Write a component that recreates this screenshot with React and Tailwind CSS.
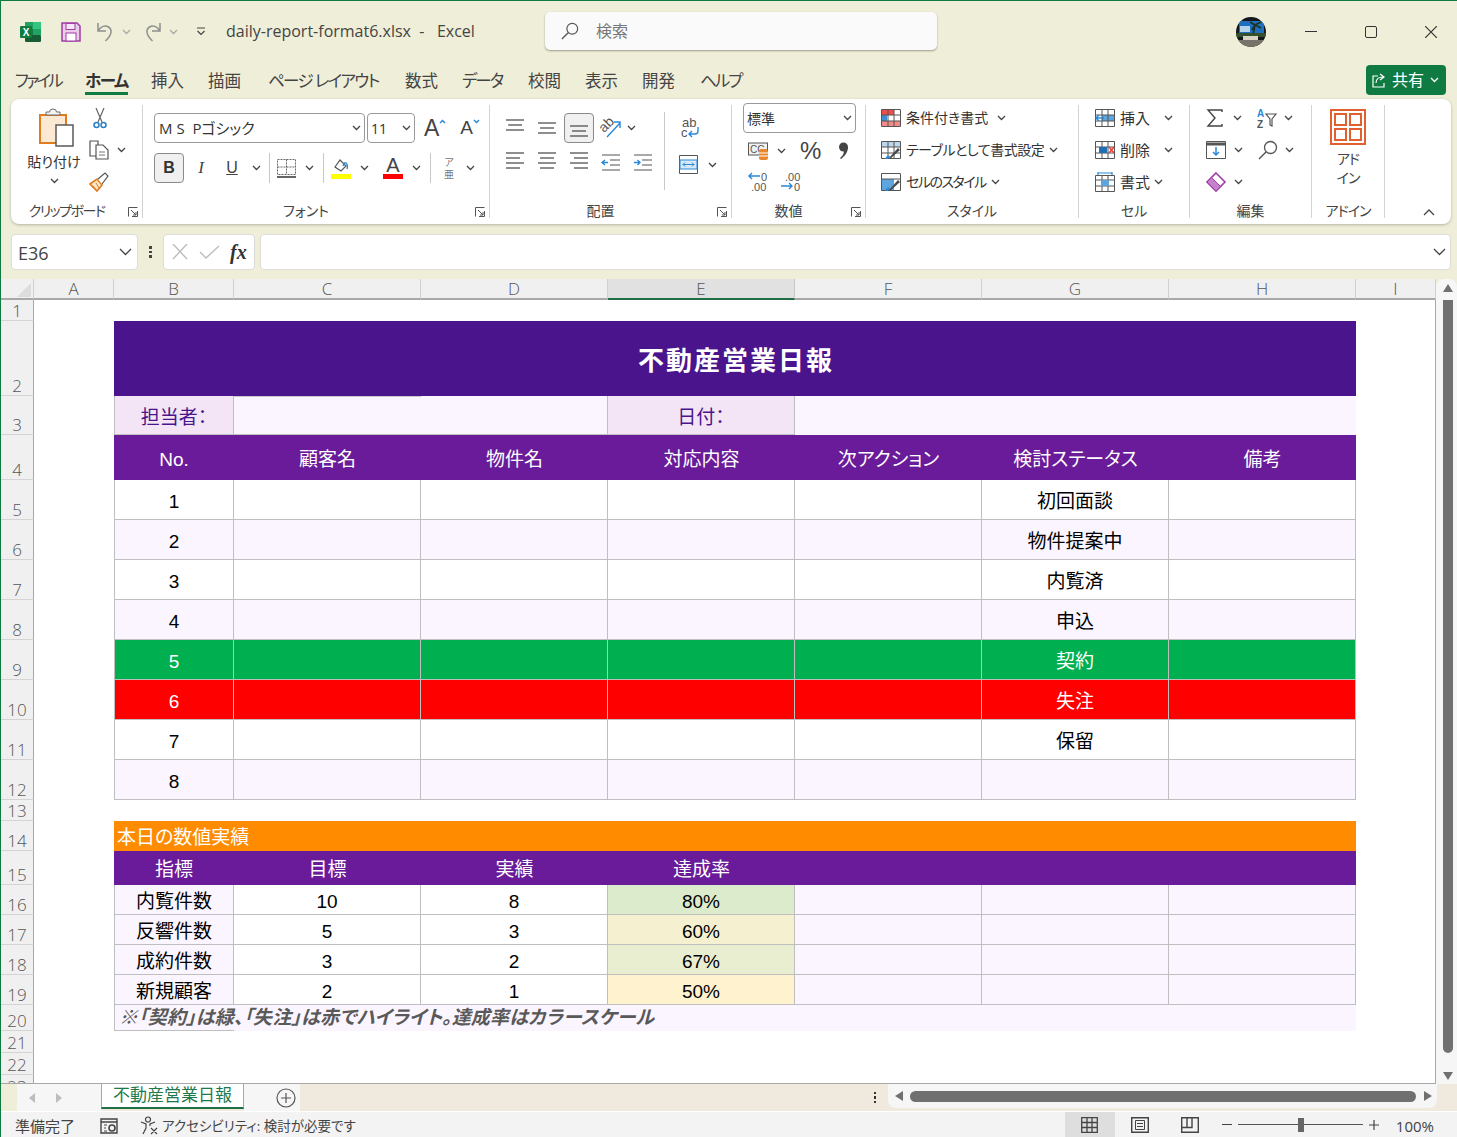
const Chev = ({ className = "", color = "#444" }) => (
  <svg width="9" height="6" viewBox="0 0 9 6" fill="none" className={className}>
    <path d="M1 1l3.5 3.5L8 1" stroke={color} strokeWidth="1.3" />
  </svg>
);

const Ic = ({ w = 20, h = 20, children, className = "" }) => (
  <svg width={w} height={h} viewBox={`0 0 ${w} ${h}`} fill="none" className={`shrink-0 overflow-visible ${className}`}>
    {children}
  </svg>
);

// small icons for the title bar
const ExcelLogo = () => (
  <Ic w={21} h={20}>
    <rect x="5" y="0" width="16" height="7" fill="#21a366" />
    <rect x="5" y="7" width="16" height="6" fill="#107c41" />
    <rect x="5" y="13" width="16" height="7" rx="1" fill="#185c37" />
    <rect x="13" y="0" width="8" height="7" fill="#33c481" />
    <rect x="13" y="7" width="8" height="6" fill="#21a366" />
    <rect x="0" y="4" width="12" height="12" rx="1" fill="#0f7a41" />
    <text x="6" y="13.5" fontSize="10" fontWeight="700" fill="#fff" textAnchor="middle" fontFamily="Liberation Sans">X</text>
  </Ic>
);
const SaveIcon = () => (
  <Ic w={20} h={20}>
    <path d="M1 1h15l3 3v15H1z" fill="#e9cde9" stroke="#a13ca8" strokeWidth="1.5" />
    <rect x="5" y="1.5" width="9" height="6" fill="#f6e8f6" stroke="#a13ca8" />
    <rect x="5" y="11" width="10" height="8" fill="#fff" stroke="#a13ca8" />
  </Ic>
);
const UndoIcon = () => (
  <Ic w={19} h={21}>
    <path d="M2 2v8h8M2.500 9.500C5 5.500 9 4 12.500 6c4 2.500 3.500 8-3 14" stroke="#8f8f8f" strokeWidth="1.5" />
  </Ic>
);
const RedoIcon = () => (
  <Ic w={19} h={21}>
    <path d="M17 2v8H9M16.500 9.500C14 5.500 10 4 6.500 6c-4 2.500-3.500 8 3 14" stroke="#8f8f8f" strokeWidth="1.5" />
  </Ic>
);
const Avatar = () => (
  <svg width="30" height="30" viewBox="0 0 30 30" className="shrink-0">
    <defs>
      <clipPath id="av"><circle cx="15" cy="15" r="15" /></clipPath>
    </defs>
    <g clipPath="url(#av)">
      <rect width="30" height="30" fill="#14181c" />
      <rect x="3" y="4" width="25" height="12" fill="#1f6fc0" />
      <rect x="4" y="9" width="10" height="6" fill="#b5d3ea" />
      <path d="M17 18l2-11M19 8l6-3M19 8l-5-3M19 8l6 3M19 8l-3 5" stroke="#1d3320" strokeWidth="1.800" />
      <rect x="0" y="16" width="30" height="4" fill="#34502d" />
      <rect x="7" y="19" width="15" height="4" fill="#d8d4c4" />
      <rect x="2" y="23" width="26" height="7" fill="#77736a" />
    </g>
  </svg>
);

// clipboard group
const PasteIcon = () => (
  <Ic w={36} h={38}>
    <rect x="1" y="6" width="26" height="28" fill="#fbe9d3" stroke="#e07d20" strokeWidth="2" />
    <path d="M7 6h14V3h-3.500a3.500 3 0 0 0-7 0H7z" fill="#f4f4f4" stroke="#6b6b6b" />
    <rect x="17" y="16" width="17" height="21" fill="#fff" stroke="#595959" strokeWidth="1.5" />
  </Ic>
);
const ScissorsIcon = () => (
  <Ic w={14} h={21}>
    <path d="M3 0l6 14M11 0L5 14" stroke="#666" strokeWidth="1.2" />
    <circle cx="3.500" cy="17" r="2.500" stroke="#2b7fc4" strokeWidth="1.5" />
    <circle cx="10.500" cy="17" r="2.500" stroke="#2b7fc4" strokeWidth="1.5" />
  </Ic>
);
const CopyIcon = () => (
  <Ic w={20} h={20}>
    <path d="M1 1h8v15H1z" stroke="#555" strokeWidth="1.2" />
    <path d="M7 5h7l5 5v9H7z" fill="#fff" stroke="#555" strokeWidth="1.2" />
    <path d="M10 12h6M10 15h6" stroke="#777" />
  </Ic>
);
const PainterIcon = () => (
  <Ic w={20} h={20}>
    <path d="M1 12l7-5 5 6-5 6z" fill="#fde5c5" stroke="#e07d20" strokeWidth="1.6" />
    <path d="M9 7l7-6 3 3-6 8" fill="#fff" stroke="#555" strokeWidth="1.2" />
    <path d="M4 14l3 4M7 11l3 5" stroke="#e07d20" />
  </Ic>
);

// font group
const GrowA = ({ up }) => (
  <span className="flex shrink-0 items-start font-['Liberation_Sans'] text-[#444]">
    <span className={up ? "text-[23px] leading-[24px]" : "text-[19px] leading-[24px]"}>A</span>
    <svg width="7" height="5" viewBox="0 0 7 5" fill="none" className="mt-[3px]">
      <path d={up ? "M1 4l2.500-2.500L6 4" : "M1 1l2.500 2.500L6 1"} stroke="#2b88d8" strokeWidth="1.5" />
    </svg>
  </span>
);
const BorderIcon = () => (
  <Ic w={19} h={19}>
    <path d="M.5.5h18v15H.5zM9.500.5v15M.5 8h18" stroke="#666" strokeDasharray="2 1" />
    <path d="M0 18h19" stroke="#333" strokeWidth="1.5" />
  </Ic>
);
const FillIcon = () => (
  <Ic w={20} h={21}>
    <path d="M4 9l5-7 6 6-5 5z" fill="#fff" stroke="#555" strokeWidth="1.2" />
    <path d="M12 8c1-3 2-4 3-3s2 3 1 6" stroke="#2b88d8" strokeWidth="1.4" />
    <rect x="0" y="16" width="20" height="5" fill="#ffff00" />
  </Ic>
);
const ColorA = () => (
  <span className="flex w-[20px] shrink-0 flex-col items-center">
    <span className="h-[16px] font-['Liberation_Sans'] text-[20px] leading-[17px] text-[#444]">A</span>
    <span className="mt-[1px] h-[5px] w-[20px] bg-[#ff0000]" />
  </span>
);

// alignment lines
const Lines = ({ rows }) => (
  <Ic w={18} h={20}>
    {rows.map(([x1, x2, y], i) => (
      <path key={i} d={`M${x1} ${y}H${x2}`} stroke="#444" strokeWidth="1.2" />
    ))}
  </Ic>
);
const OrientIcon = () => (
  <Ic w={22} h={22}>
    <text x="0" y="13" fontSize="14" fill="#555" fontFamily="Liberation Sans" transform="rotate(-45 6 10)">ab</text>
    <path d="M7 20L20 6M14 5h6v6" stroke="#2b88d8" strokeWidth="1.4" />
  </Ic>
);
const WrapIcon = () => (
  <Ic w={19} h={21}>
    <text x="1" y="10" fontSize="13" fill="#555" fontFamily="Liberation Sans">ab</text>
    <text x="0" y="20" fontSize="13" fill="#555" fontFamily="Liberation Sans">c</text>
    <path d="M17 10v4a3 3 0 0 1-3 3H8M11 14l-3 3 3 3" stroke="#2b88d8" strokeWidth="1.4" />
  </Ic>
);
const IndentIcon = ({ rev }) => (
  <Ic w={18} h={17}>
    <path d="M0 1h18M8 6h10M8 11h10M0 16h18" stroke="#555" strokeWidth="1.2" />
    <path d={rev ? "M0 8.500h6M3 6L0 8.500 3 11" : "M0 8.500h6M3.500 6L6 8.500 3.500 11"} stroke="#2b88d8" strokeWidth="1.4" />
  </Ic>
);
const MergeIcon = () => (
  <Ic w={19} h={19}>
    <path d="M.5.5h18v18H.5z" stroke="#555" />
    <rect x="1" y="5" width="17" height="9" fill="#d6e9f8" stroke="#2b88d8" />
    <path d="M4 9.500h11M6 7.500l-2 2 2 2M13 7.500l2 2-2 2" stroke="#2b88d8" />
  </Ic>
);

// number group
const CurrencyIcon = () => (
  <Ic w={21} h={21}>
    <rect x=".5" y="3" width="19" height="12" fill="#f1f1f1" stroke="#555" />
    <text x="2" y="13" fontSize="10" fill="#555" fontFamily="Liberation Sans">CC</text>
    <rect x="11" y="9" width="9" height="11" rx="2" fill="#e8872b" />
    <path d="M11 13h9M11 16h9" stroke="#fff" />
  </Ic>
);
const DecIcon = ({ more }) => (
  <Ic w={21} h={21}>
    <text x={more ? 5 : 13} y="10" fontSize="11" fill="#555" fontFamily="Liberation Sans">{more ? ".00" : "0"}</text>
    <text x={more ? 14 : 3} y="20" fontSize="11" fill="#555" fontFamily="Liberation Sans">{more ? "0" : ".00"}</text>
    {more ? (
      <path d="M1 15h11M9 12l3 3-3 3" stroke="#2b88d8" strokeWidth="1.4" />
    ) : (
      <path d="M1 5h11M4 2L1 5l3 3" stroke="#2b88d8" strokeWidth="1.4" />
    )}
  </Ic>
);
const CommaIcon = () => (
  <Ic w={11} h={18}>
    <circle cx="5.500" cy="5" r="4.500" fill="#444" />
    <path d="M10 5c0 5-3 9-7 12l-1-1c3-2 4-5 4-8z" fill="#444" />
  </Ic>
);

// style group
const Grid = () => (
  <path d="M.5.5h19v17H.5zM.5 6h19M.5 12h19M7 .5v17M13 .5v17" stroke="#555" />
);
const CondIcon = () => (
  <Ic h={18}>
    <rect x="1" y="1" width="12" height="5" fill="#ef4c4c" />
    <rect x="1" y="6" width="5" height="6" fill="#3e8ed0" />
    <rect x="1" y="12" width="18" height="5" fill="#f28a8a" />
    <Grid />
  </Ic>
);
const TableIcon = () => (
  <Ic h={19}>
    <rect x="1" y="1" width="18" height="5" fill="#bcd8ef" />
    <Grid />
    <path d="M7 18l10-11 2 2-10 9z" fill="#4a4a4a" />
    <path d="M4 18c2-4 3-4 5-3l-2 3z" fill="#2b88d8" />
  </Ic>
);
const CellStyleIcon = () => (
  <Ic h={19}>
    <rect x="1" y="6" width="12" height="11" fill="#5da5dc" />
    <path d="M.5.5h19v17H.5zM.5 6h19" stroke="#555" />
    <path d="M7 18l10-11 2 2-10 9z" fill="#4a4a4a" />
    <path d="M4 18c2-4 3-4 5-3l-2 3z" fill="#2b88d8" />
  </Ic>
);

// cell group
const InsertCellIcon = () => (
  <Ic h={18}>
    <rect x="7" y="6" width="12" height="6" fill="#5da5dc" />
    <Grid />
    <path d="M9 9H1M4 6L1 9l3 3" stroke="#2b88d8" strokeWidth="1.5" />
  </Ic>
);
const DeleteCellIcon = () => (
  <Ic h={18}>
    <Grid />
    <rect x="4" y="6" width="8" height="6" fill="#1f6fb5" />
    <path d="M14 6l5 6M19 6l-5 6" stroke="#ee3b3b" strokeWidth="1.5" />
  </Ic>
);
const FormatCellIcon = () => (
  <Ic h={20}>
    <path d="M.5 3.500h19v16H.5zM.5 8h19M.5 14h19M7 3.500v16M13 3.500v16" stroke="#555" />
    <rect x="6" y="8" width="8" height="6" fill="#5da5dc" />
    <path d="M3 1h14M3 0v3M17 0v3" stroke="#2b88d8" strokeWidth="1.2" />
  </Ic>
);

// edit group
const Sigma = () => (
  <Ic w={16} h={18}>
    <path d="M15 3V1H1l7 8-7 8h14v-2" stroke="#444" strokeWidth="1.4" />
  </Ic>
);
const SortIcon = () => (
  <Ic h={20}>
    <text x="0" y="9" fontSize="10" fontWeight="700" fill="#2b88d8" fontFamily="Liberation Sans">A</text>
    <text x="0" y="19.500" fontSize="10" fontWeight="700" fill="#555" fontFamily="Liberation Sans">Z</text>
    <path d="M9 6h10l-4 5v7l-2-1v-6z" stroke="#555" strokeWidth="1.2" />
  </Ic>
);
const FillDownIcon = () => (
  <Ic h={18}>
    <path d="M.5.5h19v17H.5z" fill="#fff" stroke="#555" />
    <path d="M0 3h20" stroke="#555" strokeWidth="3" />
    <path d="M10 6v8M7 11l3 3 3-3" stroke="#2b88d8" strokeWidth="1.5" />
  </Ic>
);
const FindIcon = ({ size = 20, color = "#555" }) => (
  <svg width={size} height={size} viewBox="0 0 20 20" fill="none" className="shrink-0">
    <circle cx="12.500" cy="7.500" r="6" stroke={color} strokeWidth="1.3" />
    <path d="M8 12l-7 7" stroke={color} strokeWidth="1.5" />
  </svg>
);
const EraserIcon = () => (
  <Ic h={20}>
    <path d="M10 1l9 9-9 9-9-9z" fill="#fff" stroke="#a13ca8" strokeWidth="1.6" />
    <path d="M5.500 5.500l9 9L10 19l-9-9z" fill="#c681cc" stroke="#a13ca8" />
  </Ic>
);
const AddinIcon = () => (
  <Ic w={36} h={36}>
    <rect x="1" y="1" width="34" height="34" stroke="#e0602f" strokeWidth="2" />
    <rect x="5" y="5" width="11" height="11" stroke="#e0602f" strokeWidth="2" />
    <rect x="20" y="5" width="11" height="11" stroke="#e0602f" strokeWidth="2" />
    <rect x="5" y="20" width="11" height="11" stroke="#e0602f" strokeWidth="2" />
    <rect x="20" y="20" width="11" height="11" stroke="#e0602f" strokeWidth="2" />
  </Ic>
);

const Launcher = () => (
  <svg width="10" height="10" viewBox="0 0 10 10" fill="none" className="absolute right-[4px] top-[3px]">
    <path d="M.5 9.500V.5h9M9.500 4v5.500H4M3 3l5 5M8 5v3H5" stroke="#555" />
  </svg>
);

const Group = ({ width, label, launcher, border = true, labelClass = "", children }) => (
  <div className={`flex my-[6px] flex-col ${width} ${border ? "border-r border-[#d3d3d3]" : ""}`}>
    <div className="flex-1">{children}</div>
    <div className={`relative h-[14px] text-center text-[14px] leading-[14px] text-[#444] ${launcher ? "pr-[20px]" : ""} ${labelClass}`}>
      {label}
      {launcher && <Launcher />}
    </div>
  </div>
);

const Sep = ({ className = "h-[30px]" }) => <div className={`w-px shrink-0 bg-[#c8c8c8] ${className}`} />;

const Ribbon = () => (
  <div className="ml-[10px] flex h-[125px] w-[1440px] shrink-0 rounded-lg bg-white shadow-[0_1px_3px_rgba(0,0,0,0.25)]">
    <Group width="w-[132px]" label="クリップボード" launcher labelClass="tracking-[-1.5px]">
      <div className="flex">
        <div className="ml-[13px] flex w-[60px] flex-col items-center">
          <div className="mt-[4px] ml-[5px]"><PasteIcon /></div>
          <div className="mt-[5px] whitespace-nowrap text-[14px] leading-[20px] text-[#333]">貼り付け</div>
          <Chev className="mt-[6px]" />
        </div>
        <div className="ml-[5px] flex flex-col">
          <div className="ml-[4px] mt-[3px]"><ScissorsIcon /></div>
          <div className="mt-[11px] flex items-center"><CopyIcon /><Chev className="ml-[8px]" /></div>
          <div className="mt-[12px]"><PainterIcon /></div>
        </div>
      </div>
    </Group>

    <Group width="w-[347px]" label="フォント" launcher>
      <div className="ml-[11px] mt-[8px] flex items-center">
        <div className="flex h-[30px] w-[211px] items-center justify-between rounded-[4px] border border-[#999] px-[4px] pr-[3px]">
          <span className="whitespace-pre text-[15px] text-[#333]">M S  Pゴシック</span>
          <Chev />
        </div>
        <div className="ml-[2px] flex h-[30px] w-[48px] items-center justify-between rounded-[4px] border border-[#999] pl-[3px] pr-[3px]">
          <span className="font-['Open_Sans'] text-[14px] text-[#333]">11</span>
          <Chev />
        </div>
        <div className="ml-[9px]"><GrowA up /></div>
        <div className="ml-[14px]"><GrowA /></div>
      </div>
      <div className="ml-[11px] mt-[10px] flex h-[30px] items-center">
        <div className="flex h-[30px] w-[30px] items-center justify-center rounded-[4px] border border-[#8a8a8a] bg-[#f0f0f0] font-['Liberation_Sans'] text-[16px] font-bold text-[#333]">B</div>
        <div className="w-[34px] text-center font-['Liberation_Serif'] text-[17px] italic text-[#444]">I</div>
        <div className="w-[28px] text-center font-['Liberation_Sans'] text-[16px] text-[#444] underline">U</div>
        <Chev className="ml-[6px]" />
        <Sep className="ml-[8px] h-[30px]" />
        <div className="ml-[7px]"><BorderIcon /></div>
        <Chev className="ml-[9px]" />
        <Sep className="ml-[9px] h-[30px]" />
        <div className="ml-[7px]"><FillIcon /></div>
        <Chev className="ml-[9px]" />
        <div className="ml-[14px]"><ColorA /></div>
        <Chev className="ml-[9px]" />
        <Sep className="ml-[9px] h-[30px]" />
        <div className="ml-[12px] flex w-[12px] flex-col items-center text-[10px] leading-[12px] text-[#777]"><span>ア</span><span>亜</span></div>
        <Chev className="ml-[11px]" />
      </div>
    </Group>

    <Group width="w-[242px]" label="配置" launcher>
      <div className="flex">
        <div className="ml-[9px] mt-[8px] flex w-[165px] shrink-0 flex-col">
          <div className="flex h-[30px] items-center">
            <div className="flex w-[32px] justify-center"><Lines rows={[[0, 18, 2], [2, 16, 7], [0, 18, 12]]} /></div>
            <div className="flex w-[32px] justify-center"><Lines rows={[[0, 18, 5], [2, 16, 10], [0, 18, 15]]} /></div>
            <div className="ml-[1px] flex h-[30px] w-[30px] items-center justify-center rounded-[4px] border border-[#8a8a8a] bg-[#f0f0f0]"><Lines rows={[[0, 18, 8], [2, 16, 13], [0, 18, 18]]} /></div>
            <div className="ml-[6px]"><OrientIcon /></div>
            <Chev className="ml-[5px]" />
          </div>
          <div className="mt-[9px] flex h-[20px] items-center">
            <div className="flex w-[32px] justify-center"><Lines rows={[[0, 18, 1], [0, 14, 6], [0, 18, 11], [0, 14, 16]]} /></div>
            <div className="flex w-[32px] justify-center"><Lines rows={[[0, 18, 1], [2, 16, 6], [0, 18, 11], [2, 16, 16]]} /></div>
            <div className="flex w-[32px] justify-center"><Lines rows={[[0, 18, 1], [4, 18, 6], [0, 18, 11], [4, 18, 16]]} /></div>
            <div className="flex w-[32px] justify-center"><IndentIcon rev /></div>
            <div className="flex w-[32px] justify-center"><IndentIcon /></div>
          </div>
        </div>
        <Sep className="mt-[7px] h-[78px]" />
        <div className="ml-[14px] flex flex-col">
          <div className="ml-[2px] mt-[12px]"><WrapIcon /></div>
          <div className="mt-[17px] flex items-center"><MergeIcon /><Chev className="ml-[10px]" /></div>
        </div>
      </div>
    </Group>

    <Group width="w-[134px]" label="数値" launcher>
      <div className="ml-[11px] -mt-[2px] flex h-[30px] w-[113px] items-center justify-between rounded-[4px] border border-[#999] pl-[3px] pr-[3px]">
        <span className="text-[14px] text-[#333]">標準</span>
        <Chev />
      </div>
      <div className="ml-[16px] mt-[7px] flex h-[21px] items-center">
        <CurrencyIcon />
        <Chev className="ml-[8px]" />
        <span className="ml-[14px] font-['Liberation_Sans'] text-[24px] leading-[24px] text-[#444]">%</span>
        <div className="ml-[17px]"><CommaIcon /></div>
      </div>
      <div className="ml-[16px] mt-[10px] flex items-center gap-[11px]"><DecIcon /><DecIcon more /></div>
    </Group>

    <Group width="w-[213px]" label="スタイル">
      <div className="ml-[15px] mt-[3px] flex flex-col gap-[12px] text-[14px] leading-[20px] text-[#333]">
        <div className="flex h-[20px] items-center"><CondIcon /><span className="ml-[5px] w-[86px] whitespace-nowrap">条件付き書式</span><Chev className="ml-[5px]" /></div>
        <div className="flex h-[20px] items-center"><TableIcon /><span className="ml-[5px] w-[138px] whitespace-nowrap tracking-[-0.5px]">テーブルとして書式設定</span><Chev className="ml-[5px]" /></div>
        <div className="flex h-[20px] items-center"><CellStyleIcon /><span className="ml-[5px] w-[80px] whitespace-nowrap tracking-[-1.5px]">セルのスタイル</span><Chev className="ml-[5px]" /></div>
      </div>
    </Group>

    <Group width="w-[111px]" label="セル">
      <div className="ml-[16px] mt-[3px] flex flex-col gap-[12px] text-[15px] leading-[20px] text-[#333]">
        <div className="flex h-[20px] items-center"><InsertCellIcon /><span className="ml-[5px] w-[44px]">挿入</span><Chev /></div>
        <div className="flex h-[20px] items-center"><DeleteCellIcon /><span className="ml-[5px] w-[44px]">削除</span><Chev /></div>
        <div className="flex h-[20px] items-center"><FormatCellIcon /><span className="ml-[5px] w-[34px]">書式</span><Chev /></div>
      </div>
    </Group>

    <Group width="w-[122px]" label="編集">
      <div className="ml-[15px] mt-[3px] flex flex-col gap-[12px]">
        <div className="flex h-[20px] items-center">
          <div className="ml-[2px] w-[26px]"><Sigma /></div><Chev />
          <div className="ml-[15px]"><SortIcon /></div><Chev className="ml-[7px]" />
        </div>
        <div className="flex h-[20px] items-center">
          <div className="ml-[1px] w-[26px]"><FillDownIcon /></div><Chev className="ml-[2px]" />
          <div className="ml-[15px]"><FindIcon /></div><Chev className="ml-[7px]" />
        </div>
        <div className="flex h-[20px] items-center">
          <div className="ml-[1px] w-[26px]"><EraserIcon /></div><Chev className="ml-[2px]" />
        </div>
      </div>
    </Group>

    <Group width="w-[73px]" label="アドイン" labelClass="tracking-[-1px]">
      <div className="mt-[4px] flex flex-col items-center">
        <AddinIcon />
        <div className="mt-[4px] text-center text-[14px] leading-[19px] tracking-[-1px] text-[#444]">アド<br />イン</div>
      </div>
    </Group>

    <div className="my-[6px] flex flex-1 items-end justify-end pb-[2px] pr-[16px]">
      <svg width="12" height="8" viewBox="0 0 12 8" fill="none"><path d="M1 7l5-5 5 5" stroke="#444" strokeWidth="1.3" /></svg>
    </div>
  </div>
);

const FormulaBar = () => (
  <div className="ml-[10px] mt-[10px] flex h-[36px] w-[1440px] shrink-0 items-stretch">
    <div className="flex w-[127px] items-center justify-between rounded-[4px] border border-[#dcdcdc] bg-white pl-[6px] pr-[5px]">
      <span className="pt-[3px] font-['Open_Sans'] text-[18px] text-[#444]">E36</span>
      <svg width="13" height="8" viewBox="0 0 13 8" fill="none"><path d="M1 1l5.500 5.500L12 1" stroke="#444" strokeWidth="1.3" /></svg>
    </div>
    <div className="flex w-[25px] flex-col items-center justify-center gap-[2px]">
      <i className="h-[2.500px] w-[2.500px] bg-[#444]" /><i className="h-[2.500px] w-[2.500px] bg-[#444]" /><i className="h-[2.500px] w-[2.500px] bg-[#444]" />
    </div>
    <div className="flex w-[92px] items-center rounded-[4px] border border-[#dcdcdc] bg-white pl-[7px]">
      <svg width="18" height="16" viewBox="0 0 18 16" fill="none"><path d="M2 0l14 15M16 0L2 15" stroke="#bdbdbd" strokeWidth="1.4" /></svg>
      <svg width="21" height="14" viewBox="0 0 21 14" fill="none" className="ml-[10px]"><path d="M1 7l6 6L20 1" stroke="#bdbdbd" strokeWidth="1.4" /></svg>
      <span className="ml-[10px] font-['Liberation_Serif'] text-[20px] font-bold italic text-[#333]">fx</span>
    </div>
    <div className="ml-[5px] flex flex-1 items-center justify-end rounded-[4px] border border-[#dcdcdc] bg-white pr-[4px]">
      <svg width="13" height="8" viewBox="0 0 13 8" fill="none"><path d="M1 1l5.500 5.500L12 1" stroke="#444" strokeWidth="1.3" /></svg>
    </div>
  </div>
);

const headFont = "font-['Open_Sans','Noto_Sans_CJK_JP',sans-serif] font-light text-[17px] text-[#555]";
const line = "border-[#bfbfbf]";
const colC = "w-[187px]";

const ColHead = ({ label, width, active }) => (
  <div className={`flex h-full items-center justify-center border-b-2 border-r ${width} ${headFont} ${active ? "border-b-[#1e6f46] border-r-[#c8c8c8] bg-[#e1e1e1] text-[#1e6f46]" : "border-b-[#a8a8a8] border-r-[#d0d0d0]"}`}>
    {label}
  </div>
);

const ColHeaders = () => (
  <div className="flex h-[21px] shrink-0 bg-[#f0f0f0]">
    <div className="flex h-full w-[33px] items-end justify-end border-b-2 border-r border-b-[#a8a8a8] border-r-[#d0d0d0] pb-[1px] pr-[2px]">
      <svg width="14" height="14" viewBox="0 0 14 14"><path d="M14 0v14H0z" fill="#dcdcdc" /></svg>
    </div>
    <ColHead label="A" width="w-[80px]" />
    <ColHead label="B" width="w-[120px]" />
    <ColHead label="C" width={colC} />
    <ColHead label="D" width={colC} />
    <ColHead label="E" width={colC} active />
    <ColHead label="F" width={colC} />
    <ColHead label="G" width={colC} />
    <ColHead label="H" width={colC} />
    <ColHead label="I" width="w-[80px]" />
  </div>
);

const Row = ({ n, h, children }) => (
  <div className={`flex shrink-0 ${h}`}>
    <div className={`flex w-[33px] shrink-0 items-end justify-center border-b border-r border-b-[#d4d4d4] border-r-[#a8a8a8] bg-[#f0f0f0] leading-[19px] ${headFont}`}>{n}</div>
    <div className="w-[80px] shrink-0" />
    {children}
  </div>
);

const Cell = ({ w = colC, bg = "", first, children, className = "text-black" }) => (
  <div className={`flex shrink-0 items-center justify-center border-b border-r pt-[5px] ${line} ${first ? "border-l" : ""} ${w} ${bg} ${className}`}>
    {children}
  </div>
);
const Cols = ({ bg, no, status, fg }) => (
  <>
    <Cell first w="w-[120px]" bg={bg} className={fg}>{no}</Cell>
    <Cell bg={bg} /><Cell bg={bg} /><Cell bg={bg} /><Cell bg={bg} />
    <Cell bg={bg} className={fg}>{status}</Cell>
    <Cell bg={bg} />
  </>
);
const Head = ({ w = colC, children }) => (
  <div className={`flex shrink-0 items-center justify-center pt-[5px] text-white ${w}`}>{children}</div>
);

const Label = ({ w, children }) => (
  <div className={`flex shrink-0 items-center justify-center border-b border-r pt-[6px] ${line} bg-[#f3e5f5] text-[#4a148c] ${w}`}>{children}</div>
);

const kpis = [
  ["内覧件数", "10", "8", "80%", "bg-[#dcebcc]"],
  ["反響件数", "5", "3", "60%", "bg-[#f5f0cf]"],
  ["成約件数", "3", "2", "67%", "bg-[#eaeed0]"],
  ["新規顧客", "2", "1", "50%", "bg-[#fff2cf]"],
];

const Sheet = () => (
  <div className="flex w-[1435px] min-w-0 flex-1 flex-col overflow-hidden border-b border-r border-[#a8a8a8] bg-white font-['Liberation_Sans','Noto_Sans_CJK_JP',sans-serif] text-[19px]">
    <Row n="1" h="h-[21px]" />
    <Row n="2" h="h-[75px]">
      <div className="flex w-[1242px] items-center justify-center bg-[#4a148c] pl-[2px] pt-[6px] text-[26px] font-bold tracking-[2px] text-white">不動産営業日報</div>
    </Row>
    <Row n="3" h="h-[39px]">
      <Label w="w-[120px] border-l">担当者：</Label>
      <div className={`w-[374px] shrink-0 border-b border-r ${line} bg-[#faf5ff]`}><div className="h-px w-[187px] bg-[#c8c8c8]" /></div>
      <Label w={colC}>日付：</Label>
      <div className="w-[561px] shrink-0 bg-[#faf5ff]" />
    </Row>
    <Row n="4" h="h-[45px]">
      <div className="flex bg-[#6a1b9a]">
        <Head w="w-[120px]">No.</Head>
        <Head>顧客名</Head><Head>物件名</Head><Head>対応内容</Head><Head>次アクション</Head><Head>検討ステータス</Head><Head>備考</Head>
      </div>
    </Row>
    <Row n="5" h="h-[40px]"><Cols no="1" status="初回面談" /></Row>
    <Row n="6" h="h-[40px]"><Cols no="2" status="物件提案中" bg="bg-[#faf5ff]" /></Row>
    <Row n="7" h="h-[40px]"><Cols no="3" status="内覧済" /></Row>
    <Row n="8" h="h-[40px]"><Cols no="4" status="申込" bg="bg-[#faf5ff]" /></Row>
    <Row n="9" h="h-[40px]"><Cols no="5" status="契約" bg="bg-[#00b050]" fg="text-white" /></Row>
    <Row n="10" h="h-[40px]"><Cols no="6" status="失注" bg="bg-[#ff0000]" fg="text-white" /></Row>
    <Row n="11" h="h-[40px]"><Cols no="7" status="保留" /></Row>
    <Row n="12" h="h-[40px]"><Cols no="8" bg="bg-[#faf5ff]" /></Row>
    <Row n="13" h="h-[21px]" />
    <Row n="14" h="h-[30px]">
      <div className="flex w-[1242px] items-center bg-[#ff8c00] pl-[3px] pt-[4px] text-white">本日の数値実績</div>
    </Row>
    <Row n="15" h="h-[34px]">
      <div className="flex w-[1242px] bg-[#6a1b9a]">
        <Head w="w-[120px]">指標</Head><Head>目標</Head><Head>実績</Head><Head>達成率</Head>
      </div>
    </Row>
    {kpis.map(([name, goal, actual, rate, color], i) => (
      <Row key={name} n={16 + i} h="h-[30px]">
        <Cell first w="w-[120px]" bg="bg-[#faf5ff]">{name}</Cell>
        <Cell>{goal}</Cell>
        <Cell>{actual}</Cell>
        <Cell bg={color}>{rate}</Cell>
        <Cell bg="bg-[#faf5ff]" /><Cell bg="bg-[#faf5ff]" /><Cell bg="bg-[#faf5ff]" />
      </Row>
    ))}
    <Row n="20" h="h-[26px]">
      <div className={`relative z-10 flex w-[120px] shrink-0 items-center whitespace-nowrap border-b border-l ${line} bg-[#faf5ff] pl-[4px] pt-[2px] text-[19px] font-bold italic tracking-[0.15px] text-[#595959]`}>※「契約」は緑、「失注」は赤でハイライト。達成率はカラースケール</div>
      <div className="w-[1122px] shrink-0 bg-[#faf5ff]" />
    </Row>
    <Row n="21" h="h-[22px]" />
    <Row n="22" h="h-[22px]" />
    <Row n="23" h="h-[22px]" />
  </div>
);

const VScroll = () => (
  <div className="flex w-[21px] shrink-0 flex-col items-center rounded-t-lg bg-[#f6f6f6] pl-[2px] pt-[4px]">
    <svg width="12" height="10" viewBox="0 0 12 10"><path d="M6 1l5 8H1z" fill="#707070" /></svg>
    <div className="mt-[7px] h-[753px] w-[10px] rounded-b-[5px] bg-[#707070]" />
    <svg width="12" height="10" viewBox="0 0 12 10" className="mt-[18px]"><path d="M6 9L1 1h10z" fill="#707070" /></svg>
  </div>
);

const TabBar = () => (
  <div className="flex h-[27px] shrink-0 items-stretch bg-[#efeadd]">
    <div className="w-[16px] bg-[#efeed8]" />
    <div className="flex w-[84px] items-center gap-[19px] bg-[#f6f6f6] pl-[12px]">
      <svg width="7" height="10" viewBox="0 0 7 10"><path d="M6 0v10L0 5z" fill="#bdbdbd" /></svg>
      <svg width="7" height="10" viewBox="0 0 7 10"><path d="M1 0v10l6-5z" fill="#bdbdbd" /></svg>
    </div>
    <div className="flex h-[25px] w-[143px] items-center justify-center border-b-2 border-l border-r border-b-[#1e6f46] border-l-[#a8a8a8] border-r-[#a8a8a8] bg-white pb-[2px] text-[17px] text-[#1e7a4a]">不動産営業日報</div>
    <div className="flex w-[56px] items-center justify-end bg-[#f6f6f6] pr-[4px]">
      <svg width="20" height="20" viewBox="0 0 20 20" fill="none"><circle cx="10" cy="10" r="9" stroke="#555" strokeWidth="1.2" /><path d="M5 10h10M10 5v10" stroke="#555" strokeWidth="1.2" /></svg>
    </div>
    <div className="flex w-[579px] flex-col items-end justify-center gap-[2px] pr-[3px]">
      <i className="h-[2.500px] w-[2.500px] bg-[#333]" /><i className="h-[2.500px] w-[2.500px] bg-[#333]" /><i className="h-[2.500px] w-[2.500px] bg-[#333]" />
    </div>
    <div className="ml-[9px] flex h-[24px] w-[549px] items-center rounded-b-lg bg-[#f6f6f6] pl-[6px]">
      <svg width="10" height="12" viewBox="0 0 10 12"><path d="M9 1v10L1 6z" fill="#707070" /></svg>
      <div className="ml-[6px] h-[11px] w-[506px] rounded-[6px] bg-[#707070]" />
      <svg width="10" height="12" viewBox="0 0 10 12" className="ml-[7px]"><path d="M1 1v10l8-5z" fill="#707070" /></svg>
    </div>
  </div>
);

const StatusBar = () => (
  <div className="flex h-[26px] shrink-0 items-stretch border-t border-white bg-[#f3f3f3] text-[#444]">
    <span className="ml-[14px] mt-[2px] self-center text-[15px] leading-[22px]">準備完了</span>
    <svg width="18" height="16" viewBox="0 0 18 16" fill="none" className="ml-[25px] mt-[2px] self-center">
      <path d="M1 1h16v14H1zM1 4h16" stroke="#444" strokeWidth="1.4" />
      <circle cx="12" cy="10" r="3" stroke="#444" strokeWidth="1.6" />
      <path d="M4 7h3M4 10h2M4 13h3" stroke="#444" />
    </svg>
    <svg width="18" height="20" viewBox="0 0 18 20" fill="none" className="ml-[22px] mt-[2px] self-center">
      <circle cx="8" cy="3.500" r="2.500" stroke="#444" strokeWidth="1.2" />
      <path d="M1 6l5 2v4l-3 6M15 6l-5 2v2M11 12l6 6M17 12l-6 6" stroke="#444" strokeWidth="1.2" />
    </svg>
    <span className="ml-[4px] mt-[2px] self-center text-[13.500px] leading-[20px]">アクセシビリティ: 検討が必要です</span>
    <div className="ml-auto flex w-[50px] items-center justify-center bg-[#dedede]">
      <svg width="17" height="16" viewBox="0 0 17 16" fill="none"><path d="M.7.7h15.600v14.600H.7zM6 .7v14.600M11 .7v14.600M.7 5.500h15.600M.7 10.500h15.600" stroke="#444" strokeWidth="1.300" /></svg>
    </div>
    <svg width="18" height="16" viewBox="0 0 18 16" fill="none" className="ml-[16px] self-center">
      <path d="M.7.7h16.600v14.600H.7z" stroke="#444" strokeWidth="1.400" /><path d="M4.500 3.500h9v9h-9zM6 6.500h6M6 9.500h6" stroke="#444" />
    </svg>
    <svg width="18" height="16" viewBox="0 0 18 16" fill="none" className="ml-[32px] self-center">
      <path d="M.7.7h16.600v14.600H.7zM.7 10.500H11V.7M6 .7v9.800" stroke="#444" strokeWidth="1.400" />
    </svg>
    <div className="ml-[23px] h-[1.500px] w-[10px] self-center bg-[#444]" />
    <div className="ml-[6px] flex w-[125px] items-center self-center">
      <div className="h-px w-[60px] bg-[#555]" />
      <div className="h-[14px] w-[6px] bg-[#666]" />
      <div className="h-px flex-1 bg-[#555]" />
    </div>
    <svg width="10" height="10" viewBox="0 0 10 10" className="ml-[6px] self-center"><path d="M0 5h10M5 0v10" stroke="#444" strokeWidth="1.200" /></svg>
    <span className="ml-[17px] mr-[23px] mt-[2px] self-center font-['Open_Sans'] text-[15px] leading-[20px]">100%</span>
  </div>
);

export default function App() {
  return (
    <div className="flex h-[1137px] w-[1457px] flex-col overflow-hidden border-l border-t border-[#107c41] bg-[#efeed8] font-['Open_Sans','Noto_Sans_CJK_JP',sans-serif] [font-feature-settings:'palt']">
      {/* title bar */}
      <div className="flex h-[61px] shrink-0 items-center">
        <div className="ml-[19px]"><ExcelLogo /></div>
        <div className="ml-[20px]"><SaveIcon /></div>
        <div className="ml-[15px]"><UndoIcon /></div>
        <Chev className="ml-[7px]" color="#aaa" />
        <div className="ml-[12px]"><RedoIcon /></div>
        <Chev className="ml-[7px]" color="#aaa" />
        <svg width="10" height="10" viewBox="0 0 10 10" fill="none" className="ml-[18px]"><path d="M1 1h8M1.500 4l3.500 3.500L8.500 4" stroke="#444" strokeWidth="1.200" /></svg>
        <span className="mb-[2px] ml-[20px] w-[248px] whitespace-pre text-[16px] text-[#444]">daily-report-format6.xlsx  -   Excel</span>
        <div className="mb-[2px] ml-[71px] flex h-[38px] w-[392px] items-center rounded-[5px] bg-[#fafafa] pl-[16px] shadow-[0_1px_2px_rgba(0,0,0,0.35)]">
          <FindIcon size={18} color="#555" />
          <span className="ml-[17px] text-[16px] text-[#777]">検索</span>
        </div>
        <div className="ml-auto"><Avatar /></div>
        <div className="ml-[39px] h-[1.500px] w-[12px] bg-[#333]" />
        <div className="ml-[48px] h-[12px] w-[12px] rounded-[2px] border-[1.500px] border-[#333]" />
        <svg width="12" height="12" viewBox="0 0 12 12" fill="none" className="ml-[48px] mr-[20px]"><path d="M0 0l12 12M12 0L0 12" stroke="#333" strokeWidth="1.200" /></svg>
      </div>

      {/* ribbon tabs */}
      <div className="flex h-[37px] shrink-0 items-start">
        <div className="ml-[14px] flex gap-[23px] pt-[8px] text-[16.500px] leading-[22px] text-[#444]">
          <span className="w-[47px] whitespace-nowrap tracking-[-2.800px]">ファイル</span>
          <span className="w-[43px] whitespace-nowrap border-b-[3px] border-[#107c41] font-bold tracking-[-1.500px] text-[#333]">ホーム</span>
          <span>挿入</span>
          <span className="ml-[1px]">描画</span>
          <span className="ml-[4px] w-[111px] whitespace-pre tracking-[-1.600px]">ページ レイアウト</span>
          <span className="ml-[3px]">数式</span>
          <span className="ml-[1px] w-[41px] whitespace-nowrap tracking-[-2px]">データ</span>
          <span className="ml-[2px]">校閲</span>
          <span className="ml-[1px]">表示</span>
          <span className="ml-[1px]">開発</span>
          <span className="ml-[2px] w-[41px] whitespace-nowrap tracking-[-2px]">ヘルプ</span>
        </div>
        <div className="ml-auto mr-[11px] mt-[3px] flex h-[30px] w-[80px] items-center rounded-[4px] bg-[#0f7b43] pl-[6px] text-white">
          <svg width="15" height="15" viewBox="0 0 15 15" fill="none"><path d="M6 3H1v11h11v-4M4 10c0-4 3-6 7-6M8 1l4 3-4 3" stroke="#fff" strokeWidth="1.200" /></svg>
          <span className="ml-[5px] text-[16px]">共有</span>
          <Chev className="ml-[6px]" color="#fff" />
        </div>
      </div>

      <Ribbon />
      <FormulaBar />

      <div className="mt-[9px] flex min-h-0 flex-1 flex-col">
        <div className="flex min-h-0 flex-1">
          <div className="flex w-[1435px] min-w-0 flex-col">
            <ColHeaders />
            <Sheet />
          </div>
          <VScroll />
        </div>
        <TabBar />
        <StatusBar />
      </div>
    </div>
  );
}
